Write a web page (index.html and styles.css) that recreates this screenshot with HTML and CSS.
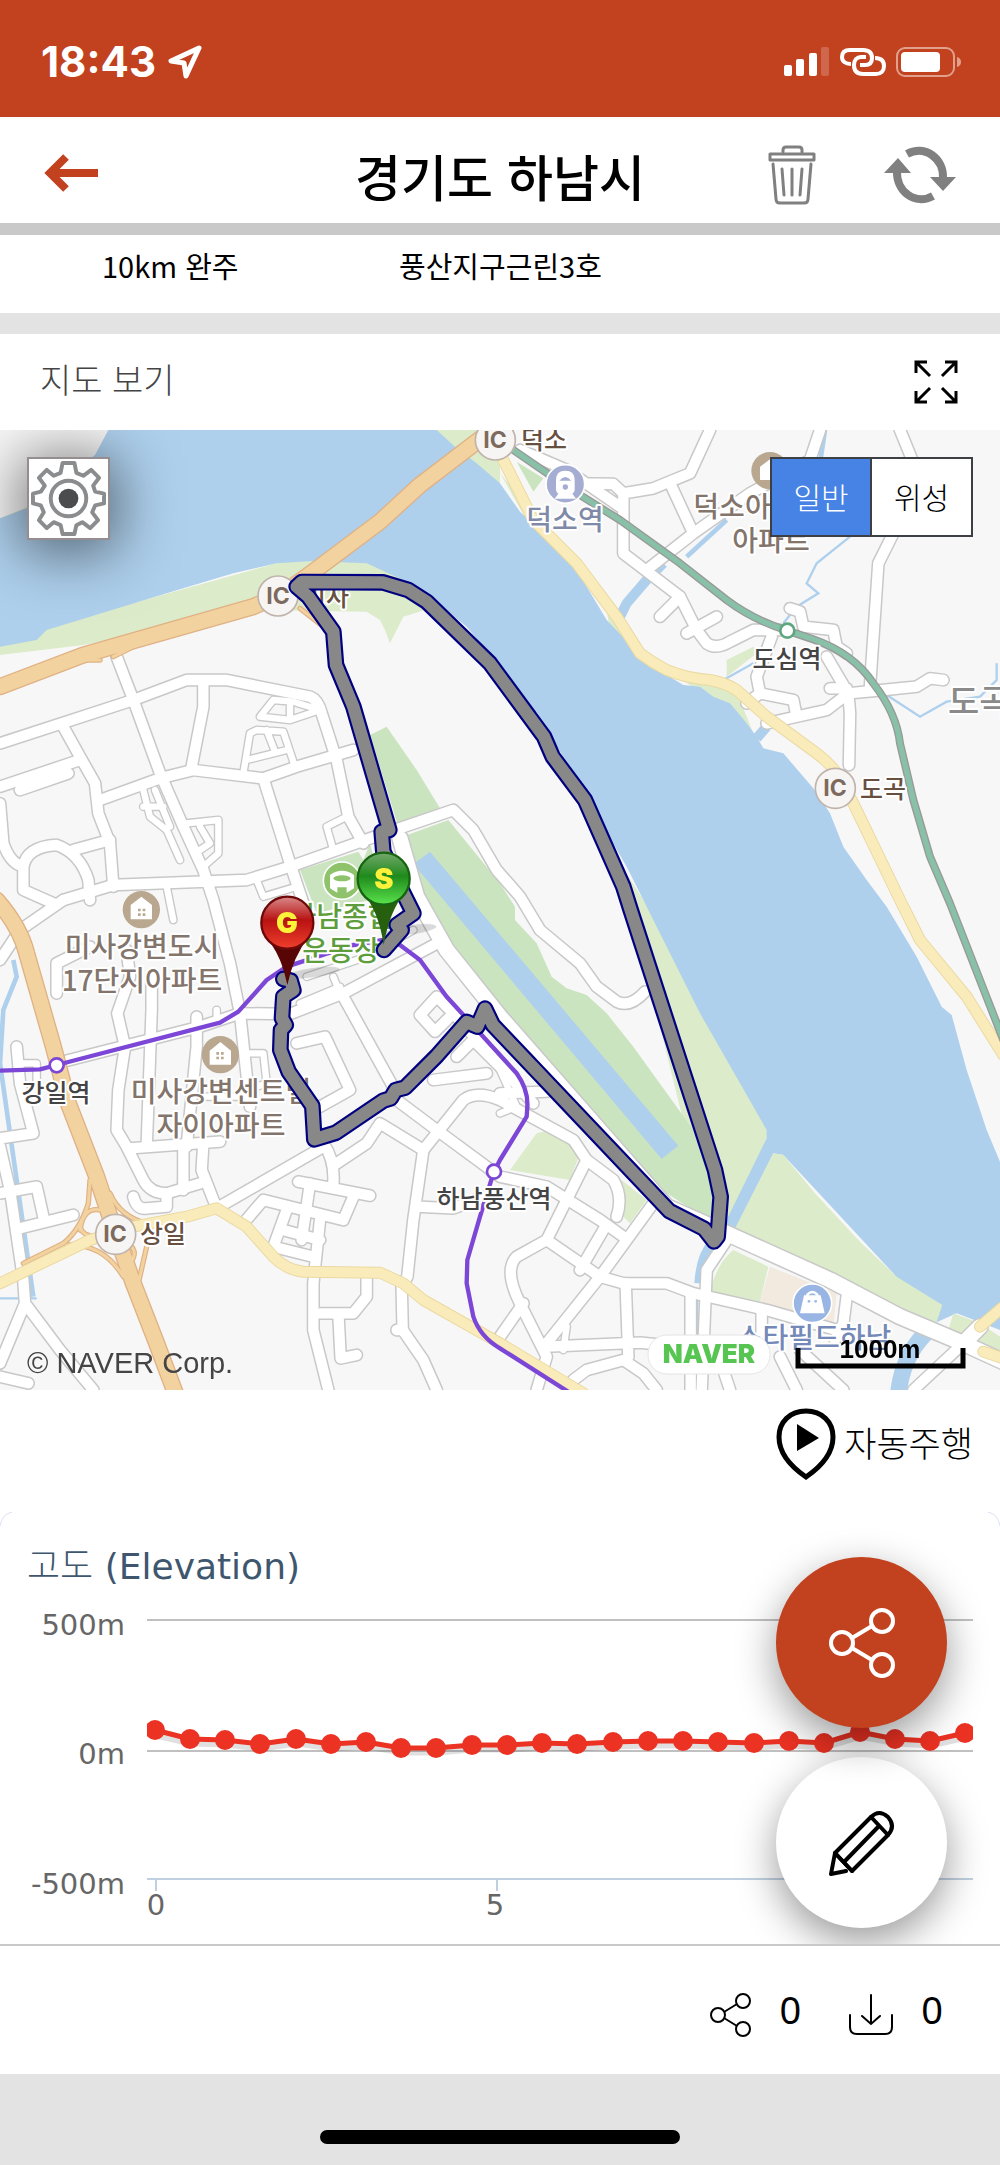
FILE: index.html
```
<!DOCTYPE html>
<html lang="ko">

<head>
  <meta charset="utf-8">
  <meta name="viewport" content="width=device-width, initial-scale=1.0">
  <title>경기도 하남시</title>
  <link rel="stylesheet" href="styles.css">
</head>

<body>
  <div class="statusbar">
    <div class="clock">
      <span>18:43</span>
      <svg width="34" height="34" viewBox="0 0 34 34"><path d="M31 3 L3 16 L16 18 L18 31 Z" fill="none" stroke="#fff" stroke-width="5" stroke-linejoin="round"/></svg>
    </div>
    <div class="phone-icons">
      <svg width="46" height="30" viewBox="0 0 46 30" fill="#fff">
        <rect x="0" y="18" width="8" height="11" rx="2"/>
        <rect x="12" y="12" width="8" height="17" rx="2"/>
        <rect x="25" y="6" width="8" height="23" rx="2"/>
        <rect x="37" y="0" width="8" height="29" rx="2" opacity=".2"/>
      </svg>
      <svg width="46" height="30" viewBox="0 0 46 30" fill="none" stroke="#fff" stroke-width="4">
        <path d="M11 17 C5 17 2 14 2 10 C2 5 5 3 10 3 H23 C29 3 32 6 32 11 C32 16 29 18 25 18 H20"/>
        <path d="M35 11 C41 11 44 14 44 19 C44 24 41 27 36 27 H23 C17 27 14 24 14 18 C14 13 17 10 21 10 H26"/>
      </svg>
      <svg width="66" height="30" viewBox="0 0 66 30">
        <rect x="1" y="1" width="57" height="28" rx="8" fill="none" stroke="#e0a08c" stroke-width="2"/>
        <rect x="5" y="5" width="39" height="20" rx="4" fill="#fff"/>
        <path d="M61 10 Q65 11 65 15 Q65 19 61 20 Z" fill="#e0a08c"/>
      </svg>
    </div>
  </div>

  <header class="header">
    <div class="header-left">
      <button class="icon-button" aria-label="뒤로">
        <svg width="54" height="38" viewBox="0 0 54 38" fill="none" stroke="#c2411e" stroke-width="8"><path d="M54 19 H6"/><path d="M22 3 L6 19 L22 35"/></svg>
      </button>
    </div>
    <h1>경기도 하남시</h1>
    <div class="header-right">
      <button class="icon-button" aria-label="삭제">
        <svg width="48" height="60" viewBox="0 0 48 60" fill="none" stroke="#808080" stroke-width="3" stroke-linecap="round" stroke-linejoin="round">
          <path d="M15 7 V5 Q15 2 18 2 H31 Q34 2 34 5 V7"/>
          <rect x="2" y="9" width="44" height="6"/>
          <path d="M5 19 L8 54 Q8 58 12 58 H36 Q40 58 40 54 L43 19"/>
          <path d="M14 24 L16 50 M24 24 V50 M34 24 L32 50"/>
        </svg>
      </button>
      <button class="icon-button" aria-label="새로고침">
        <svg width="72" height="58" viewBox="0 0 72 58">
          <g fill="none" stroke="#808080" stroke-width="8">
            <path d="M23 8 C41 -2 60 13 59 32"/>
            <path d="M49 50 C31 60 12 45 13 25"/>
          </g>
          <path d="M46 31 H72 L59 45 Z M0 27 L14 12 L27 27 Z" fill="#808080"/>
        </svg>
      </button>
    </div>
  </header>

  <div class="summary">
    <span>10km 완주</span>
    <span>풍산지구근린3호</span>
  </div>

  <div class="map-title">
    <h2>지도 보기</h2>
    <button class="icon-button" aria-label="전체 화면">
      <svg width="44" height="44" viewBox="0 0 44 44" fill="none" stroke="#000" stroke-width="3">
        <path d="M2 13 V2 H13 M2 2 L16 16"/>
        <path d="M31 2 H42 V13 M42 2 L28 16"/>
        <path d="M2 31 V42 H13 M2 42 L16 28"/>
        <path d="M31 42 H42 V31 M42 42 L28 28"/>
      </svg>
    </button>
  </div>

  <div class="map">
    <svg class="map-canvas" viewBox="0 0 1000 960">
      <defs>
        <g id="roads">
          <path d="M0 940 L400 810 L560 750 L680 750 L930 800 Q955 810 965 850 L1010 990 L1045 1160 L1090 1240"/>
          <path d="M350 680 L400 810 L480 1030 L550 1190 L610 1320 L640 1410 L690 1600 L720 1750 L735 1890 L750 2030"/>
          <path d="M190 890 L240 980 L285 1060 L295 1150 L330 1240 L340 1370"/>
          <path d="M0 1070 L240 990 M60 1080 L205 1030"/>
          <path d="M300 1110 L480 1045 L580 1020 L790 1045 L890 1010 L1060 960"/>
          <path d="M610 760 V830 L575 1010 M790 1045 L870 1300 L910 1420"/>
          <path d="M190 1410 L340 1365 L740 1350 L870 1310 L1110 1225 L1360 1140 L1420 1200 L1490 1320 L1560 1400 L1620 1500 L1740 1600 L1790 1670 L1850 1715 Q1890 1735 1935 1685"/>
          <path d="M0 1120 L10 1240 Q30 1300 70 1310 Q80 1250 170 1245 Q240 1270 265 1350 L270 1410 M220 1260 L330 1230 M70 1310 L70 1380 L160 1420"/>
          <path d="M0 1590 L60 1500 L190 1410 M170 1690 V1600 L270 1550"/>
          <path d="M380 1560 L390 1640 L352 1750 L375 1850 L355 1980 L350 2100 L380 2150 L430 2250 Q450 2290 500 2290 L600 2260"/>
          <path d="M455 1640 V1740 L440 2150 M590 1760 V1850 L560 2150"/>
          <path d="M390 2155 L660 2135 M550 2150 V2280 M610 2140 L605 2220 L650 2335 L970 2150"/>
          <path d="M170 1900 L600 1790 L720 1750 L870 1752 L1030 1690 L1330 1530"/>
          <path d="M50 1850 L60 1960 L100 2110 L0 2125 M0 2150 L30 2280 L70 2550 L75 2620 L180 2760 L280 2880 M75 2620 L0 2800 M0 2840 L85 2860"/>
          <path d="M0 2290 L110 2270 L130 2360 M60 2395 L220 2355"/>
          <path d="M400 2300 Q410 2340 440 2335 L500 2330 V2290"/>
          <path d="M895 2255 L1110 2297 M930 2260 L905 2430 M1060 2300 L1030 2370 L790 2310 L730 2380 M970 2140 Q1005 2190 1000 2260 M960 2370 L940 2560 V2700 L985 2880 M860 2340 L820 2450 L940 2480 M850 2400 L960 2430"/>
          <path d="M1010 2200 L1100 2140 L1140 2080 L1270 2160 L1240 2370 L1222 2540 L1205 2570 L1208 2700 L1270 2790 L1310 2880 M1190 2700 H1210"/>
          <path d="M1250 2330 L1360 2335 L1450 2300"/>
          <path d="M1190 2010 L1310 2100 L1500 2240 L1640 2270 L1800 2370 L1870 2420"/>
          <path d="M1270 2160 L1390 2010 Q1430 1980 1500 2010 L1720 2130 L1760 2190 L1840 2250 Q1870 2300 1850 2360"/>
          <path d="M1030 1700 L1190 1990 M890 1840 L975 1820 L1050 1980 L960 2030"/>
          <path d="M1260 1755 L1310 1700 L1360 1750 L1305 1805 Z M1360 1750 L1600 2020"/>
          <path d="M1370 1880 L1420 1830 L1520 1930 M1460 1930 L1300 1950 M1500 1990 L1640 1985"/>
          <path d="M960 2650 H1060 L1100 2600 V2540 M1015 2650 L1022 2785 L1070 2775"/>
          <path d="M1760 2190 L1640 2430 L1550 2480 Q1510 2520 1560 2620 L1640 2780 L1610 2880 M1960 2320 L1800 2540 L1640 2740 M1640 2430 L1800 2540 L1870 2560 H2000 L2080 2590 L2300 2640 L2510 2700"/>
          <path d="M1877 2560 L1885 2780 M1640 2750 L1920 2738 L2040 2750 M1570 2620 L1500 2720 M1810 2400 L1740 2520 M2180 2430 L2120 2520 L2105 2880 M2072 2590 V2880"/>
          <path d="M2285 2640 V2780 M2540 2600 L2530 2680 L2505 2730 M1720 2850 L1760 2820 L1870 2790 L1930 2830 L1970 2880 M2170 2820 L2190 2880 M2340 2780 L2390 2880 M2400 2760 L2530 2880 M2890 2740 L2740 2880"/>
          <path d="M2130 0 L2070 130 L1960 175 L1870 190 L1840 162 L1760 160 M1560 60 L1700 120 L1860 230 M1870 190 V370 L2040 500 L2090 600 L2120 640 Q2150 660 2190 635 L2260 600 L2340 600"/>
          <path d="M1940 420 L2080 310 L2250 190 L2430 90 L2460 0 M2015 170 L2080 310 M2040 500 L1980 560 M2150 560 L2060 610 M2700 0 L2745 110 M2680 310 L2635 400 L2610 770"/>
          <path d="M2370 535 L2400 545 L2410 590 L2500 600 L2510 650 L2540 670 M2315 620 L2270 740 L2280 790 L2380 810 L2390 860 M2480 680 L2545 790 L2650 780 L2750 770 L2790 745 L2830 750 M2490 775 H2540 M2300 880 L2480 840 L2545 790 L2550 850 L2547 1005 M2280 790 L2240 820"/>
        </g>
        <g id="lanes">
          <path d="M780 860 L820 810 L880 815 L960 840 L870 870 Z M870 815 V870 M730 1030 L750 910 L770 900 L850 905 L885 1010 M740 990 L860 960 M800 900 L825 965"/>
          <path d="M430 1080 L450 1160 L500 1200 L540 1290 M465 1080 L510 1190 M430 1130 L490 1130 M560 1180 L655 1170 V1270 L610 1310 M600 1190 L630 1240 L600 1260"/>
          <path d="M1000 1260 L980 1190 L1040 1160 M770 1350 L790 1400 L890 1370 M500 1370 L520 1470 M70 1500 L120 1460"/>
          <path d="M50 1900 H110 V1960 M730 1870 L790 1870 L800 1960 L740 1980 M620 2000 H720 M920 1640 L1100 1580 L1240 1500 M900 1720 L1020 1670 M1000 1640 L1020 1690 M650 1740 V1770"/>
          <path d="M1500 1920 L1550 2030 L1500 2050 M1560 1990 L1500 2000 M1690 2760 L1700 2690"/>
        </g>
        <path id="riverside" d="M1200 1225 L1250 1400 L1340 1560 L1500 1760 L2000 2330 L2180 2410 L2490 2550 L2700 2660 L2890 2740 L3010 2795 M2890 2740 L2940 2690"/>
        <path id="highway" d="M0 770 L250 675 L760 530 L850 490 L940 425 L1140 275 L1260 165 L1450 20 M-10 1410 Q60 1490 80 1570 L160 1850 L205 2020 L290 2240 L330 2360 L400 2560 L470 2740 L530 2900"/>
        <path id="ramps" d="M270 2250 L265 2320 Q240 2400 190 2440 L70 2500 M330 2290 Q360 2360 440 2380 M240 2400 Q250 2330 300 2340 M250 2360 Q220 2420 300 2420 M200 2445 Q310 2440 370 2540 M440 2450 L415 2560 M380 2440 Q420 2460 390 2500 M900 535 L970 590 M400 650 L340 680 M230 690 L300 690"/>
        <path id="avenue" d="M1505 80 L1600 270 Q1680 350 1730 400 L1850 560 L1920 670 Q1960 700 2000 720 Q2060 745 2130 750 Q2180 760 2210 780 L2300 860 L2450 970 Q2490 1000 2510 1030 L2560 1120 L2700 1410 L2760 1530 L2900 1700 L3010 1875 M0 2560 L270 2430 L400 2390 L560 2360 L650 2335 L740 2390 L820 2480 Q860 2520 910 2525 L1140 2528 L1210 2560 L1270 2610 L1500 2740 L1750 2890 M2940 2690 L3010 2630 M2950 2765 L3010 2785"/>
        <path id="rail" d="M1540 60 L1700 170 L1860 270 L2040 400 L2180 510 Q2260 570 2362 602 L2440 628 Q2560 670 2620 760 Q2690 850 2700 940 L2740 1110 L2790 1280 L2850 1420 L3010 1830"/>
        <path id="track" d="M1152 1560 L1205 1500 L1190 1485 L1240 1450 L1210 1390 L1150 1265 L1145 1205 L1168 1200 L1060 830 L1008 705 L1000 605 L925 500 L890 470 L905 456 L1148 457 L1225 480 L1280 515 L1470 700 L1632 920 L1658 980 L1755 1110 L1870 1370 L1892 1440 L2145 2220 L2162 2300 L2153 2420 L2142 2434 L2112 2396 L2008 2343 L1478 1784 L1455 1736 L1432 1790 L1400 1776 L1310 1878 L1215 1973 L1187 1980 L1172 2005 L1150 2012 L1008 2108 L943 2128 L937 2028 L866 1925 L841 1860 L843 1800 L857 1785 L846 1765 L850 1700 L880 1680 L872 1652 L850 1647"/>
        <linearGradient id="pinGreen" x1="0" y1="0" x2="0" y2="1">
          <stop offset="0" stop-color="#74a86c"/>
          <stop offset=".45" stop-color="#1f8a1c"/>
          <stop offset="1" stop-color="#5ae34c"/>
        </linearGradient>
        <linearGradient id="pinRed" x1="0" y1="0" x2="0" y2="1">
          <stop offset="0" stop-color="#d98a8a"/>
          <stop offset=".45" stop-color="#b81212"/>
          <stop offset="1" stop-color="#f0402c"/>
        </linearGradient>
      </defs>

      <!-- land, water and roads on the finer grid -->
      <svg width="1000" height="960" viewBox="0 0 3000 2880">
        <rect width="3000" height="2880" fill="#f7f7f7"/>
        <g fill="#dcebc9">
          <path d="M1290 0 H1500 V160 L1420 120 Z M0 265 L80 232 L85 245 L0 272 Z"/>
          <path d="M0 675 L250 645 L780 540 L1100 545 L1140 570 L1155 600 L1170 640 L1210 560 L1290 535 V380 H900 L0 630 Z"/>
          <path d="M1860 1300 L1930 1410 L2310 2100 L2185 2400 H2130 Z"/>
          <path d="M1500 130 L1660 320 L1580 270 Z M1820 540 L1900 670 L1830 600 Z M2000 710 L2100 790 L2130 805 L2190 830 L2270 935 L2200 760 Z"/>
          <path d="M2180 690 L2260 650 L2270 670 L2180 740 Z M1610 2110 L1690 2090 L1740 2170 L1710 2250 L1530 2220 Z M1865 2250 L1940 2310 L1890 2380 L1850 2340 Z"/>
        </g>
        <path fill="#aed0ed" d="M325 0 H1310 L1370 55 L1430 100 L1500 160 L1560 245 L1650 330 L1730 420 L1820 570 L1920 675 L2000 735 L2050 765 L2100 770 L2140 800 L2190 820 L2240 880 L2270 920 L2290 955 L2350 970 L2440 1075 L2490 1150 L2530 1250 L2600 1350 L2660 1430 L2750 1580 L2825 1730 L2855 1755 L2900 1920 L2960 2100 L3000 2195 V2700 L2870 2650 L2780 2690 L2680 2530 L2350 2175 L2320 2170 L2200 2410 L2165 2400 L2300 2125 V2100 L2100 1750 L1930 1410 L1880 1310 L1660 930 L1500 710 L1400 590 L1290 500 L1230 460 L1100 400 L940 393 L830 400 L700 430 L500 490 L140 600 L110 630 L0 650 V265 L80 235 L285 75 Z"/>
        <g fill="#dcebc9">
          <path d="M2320 2170 L2350 2175 L2445 2290 L2580 2435 L2690 2540 L2827 2625 L2805 2690 L2500 2560 L2200 2405 Z"/>
          <path d="M2200 2460 L2305 2510 L2280 2615 L2130 2585 Q2150 2500 2200 2460 Z M2860 2650 L2940 2680 L3000 2720 V2770 L2845 2700 Z"/>
        </g>
        <path fill="#f2e9df" d="M2310 2510 L2510 2590 L2500 2690 L2280 2615 Z"/>
        <g fill="#cbe4c0">
          <path d="M1110 915 L1160 890 L1250 1020 L1320 1135 L1195 1190 Z"/>
          <path d="M1195 1225 L1345 1170 L1500 1360 L1545 1430 L1545 1470 L1610 1540 L1655 1640 L1700 1675 L1760 1695 L1820 1750 L1900 1850 L2080 2100 L2160 2300 L2140 2380 L2000 2290 L1500 1730 L1360 1570 L1250 1410 Z"/>
          <path d="M900 1320 L1075 1265 L1090 1290 L1110 1240 L1150 1400 L950 1450 Z M1550 95 L1630 145 L1600 185 Z"/>
        </g>
        <path fill="#aed0ed" d="M1240 1302 L1290 1265 L2035 2147 L1985 2187 Z"/>
        <g fill="none" stroke="#aed0ed">
          <path stroke-width="34" d="M2140 2440 Q2105 2480 2100 2560"/>
          <path stroke-width="14" d="M2088 2580 V2880 M2475 0 L2460 100 M2180 270 L2060 380 M40 1590 L50 1640 L10 1740 L0 1900 L50 2250 L100 2600"/>
          <path stroke-width="30" d="M1990 400 L1940 450 L1880 520 L1860 560 M2300 890 L2270 925"/>
          <path stroke-width="50" d="M2800 2690 Q2710 2760 2695 2890"/>
          <path stroke-width="7" d="M2550 320 L2450 400 L2420 460 L2455 490 L2390 530 L2350 580 M2660 795 L2760 860 L2840 815 L2940 800 L2990 750 V700 M2420 860 L2300 890 M2260 700 L2170 750 M0 2605 H110"/>
        </g>

        <g fill="none" stroke-linejoin="round" stroke-linecap="round">
          <use href="#roads" class="road-case"/>
          <use href="#lanes" class="lane-case"/>
          <use href="#riverside" stroke="#c8c8c8" stroke-width="54"/>
          <use href="#roads" class="road"/>
          <use href="#lanes" class="lane"/>
          <use href="#riverside" stroke="#fff" stroke-width="45"/>
          <use href="#ramps" stroke="#e0b184" stroke-width="16"/>
          <use href="#highway" stroke="#e0b184" stroke-width="52"/>
          <use href="#ramps" stroke="#f2d3a0" stroke-width="9"/>
          <use href="#highway" stroke="#f2d3a0" stroke-width="44"/>
          <use href="#avenue" stroke="#ead9a2" stroke-width="36"/>
          <use href="#avenue" stroke="#faecba" stroke-width="30"/>
          <use href="#rail" stroke="#999" stroke-width="24"/>
          <use href="#rail" stroke="#89c0a8" stroke-width="16"/>
          <path d="M0 1922 L120 1918 L170 1905 L660 1778 L715 1745 L800 1650 L860 1610 L1060 1545 L1150 1530 L1200 1545 L1260 1590 L1340 1700 L1550 1930 Q1585 1980 1582 2030 L1580 2060 L1500 2190 L1480 2230 L1440 2360 L1402 2490 L1400 2560 L1420 2660 Q1440 2720 1500 2755 L1720 2895" stroke="#7c46d6" stroke-width="13"/>
        </g>
        <g fill="#fff" stroke-width="8">
          <circle cx="2362" cy="602" r="21" stroke="#5fa77f"/>
          <circle cx="170" cy="1906" r="21" stroke="#7c46d6"/>
          <circle cx="1482" cy="2225" r="21" stroke="#7c46d6"/>
        </g>

        <g fill="#f7f5f3" stroke="#bfb3ab" stroke-width="5">
          <circle cx="1486" cy="30" r="60"/>
          <circle cx="834" cy="498" r="60"/>
          <circle cx="2506" cy="1075" r="60"/>
          <circle cx="347" cy="2413" r="60"/>
        </g>

        <!-- places -->
        <g stroke="#fff" stroke-width="5">
          <circle cx="1696" cy="162" r="58" fill="#a6add2"/>
          <circle cx="1026" cy="1352" r="56" fill="#8fc36b"/>
          <circle cx="2437" cy="2620" r="58" fill="#98b5e3"/>
        </g>
        <g fill="#b9a78f">
          <circle cx="2310" cy="122" r="56"/>
          <circle cx="424" cy="1439" r="56"/>
          <circle cx="661" cy="1874" r="56"/>
        </g>
        <g fill="#fff">
          <path d="M2280 150 V110 L2310 88 L2340 110 V150 Z M392 1468 V1425 L424 1400 L456 1425 V1468 Z M629 1904 V1862 L661 1836 L693 1862 V1904 Z"/>
          <path d="M1668 178 V150 Q1668 122 1696 122 Q1724 122 1724 150 V178 Q1724 192 1710 192 H1682 Q1668 192 1668 178 Z"/>
          <path d="M1676 190 L1664 206 H1728 L1716 190 Z M990 1335 Q1026 1310 1062 1335 V1375 L1040 1388 V1372 H1012 V1388 L990 1375 Z"/>
          <path d="M2412 2596 H2462 L2474 2650 H2400 Z"/>
        </g>
        <path d="M2422 2604 V2594 Q2437 2578 2452 2594 V2604" fill="none" stroke="#fff" stroke-width="7"/>
        <g fill="#a6add2">
          <path d="M1678 152 Q1696 130 1714 152 Z"/>
          <circle cx="1696" cy="171" r="8"/>
        </g>
        <g fill="#98b5e3">
          <circle cx="2427" cy="2614" r="4"/>
          <circle cx="2447" cy="2614" r="4"/>
        </g>
        <path d="M414 1436 h8 v8 h-8 z m14 0 h8 v8 h-8 z m-14 14 h8 v8 h-8 z m14 0 h8 v8 h-8 z M649 1866 h8 v8 h-8 z m14 0 h8 v8 h-8 z m-14 14 h8 v8 h-8 z m14 0 h8 v8 h-8 z" fill="#b9a78f"/>
        <ellipse cx="1026" cy="1345" rx="26" ry="9" fill="#8fc36b"/>
      </svg>

      <g class="label">
        <g class="ic">
          <text x="495" y="18">IC</text>
          <text x="278" y="174">IC</text>
          <text x="835" y="366">IC</text>
          <text x="115" y="812">IC</text>
        </g>
        <g class="junction">
          <text x="521" y="19">덕소</text>
          <text x="303" y="176">미사</text>
          <text x="860" y="368">도곡</text>
          <text x="140" y="813">상일</text>
        </g>
        <g class="station">
          <text x="787" y="238">도심역</text>
          <text x="56" y="672">강일역</text>
          <text x="494" y="778">하남풍산역</text>
        </g>
        <g class="place">
          <text x="565" y="100" fill="#7f8aa8">덕소역</text>
          <text x="732" y="87">덕소아</text>
          <text x="771" y="121">아파트</text>
          <text x="142" y="527">미사강변도시</text>
          <text x="142" y="561">17단지아파트</text>
          <text x="221" y="672">미사강변센트럴</text>
          <text x="221" y="706">자이아파트</text>
          <text x="342" y="497" fill="#5d9d3c">하남종합</text>
          <text x="341" y="531" fill="#5d9d3c">운동장</text>
          <text x="814" y="918" fill="#7489b8">스타필드하남</text>
        </g>
        <text x="948" y="284" class="town">도곡</text>
      </g>

      <svg width="1000" height="960" viewBox="0 0 3000 2880">
        <g fill="#000" opacity=".15">
          <ellipse cx="1230" cy="1500" rx="80" ry="14" transform="rotate(-8 1230 1500)"/>
          <ellipse cx="940" cy="1628" rx="80" ry="14" transform="rotate(-8 940 1628)"/>
        </g>
        <g fill="none" stroke-linejoin="round" stroke-linecap="round">
          <use href="#track" stroke="#000080" stroke-width="50"/>
          <use href="#track" stroke="#888" stroke-width="37"/>
        </g>
        <path d="M1088 1390 H1214 Q1170 1440 1151 1545 Q1135 1440 1088 1390 Z" fill="#26600f"/>
        <circle cx="1151" cy="1346" r="78" fill="url(#pinGreen)" stroke="#176312" stroke-width="7"/>
        <path d="M799 1522 H925 Q880 1580 862 1665 Q846 1580 799 1522 Z" fill="#570505"/>
        <circle cx="862" cy="1478" r="78" fill="url(#pinRed)" stroke="#6d0909" stroke-width="7"/>
      </svg>
      <g class="pin-letter">
        <text x="384" y="459">S</text>
        <text x="287" y="503">G</text>
      </g>

      <text x="27" y="943" class="copyright">© NAVER Corp.</text>
      <rect x="648" y="905" width="122" height="39" rx="19" fill="#fff" stroke="#e4e4e4"/>
      <text x="709" y="933" class="naver">NAVER</text>
      <path d="M798 918 V936 H963 V918" fill="none" stroke="#000" stroke-width="5"/>
      <text x="880" y="928" class="scale">1000m</text>
    </svg>

    <button class="map-setting" aria-label="지도 설정">
      <svg width="75" height="75" viewBox="0 0 76 76" fill="none" stroke="#8a8c8e" stroke-width="4" stroke-linejoin="round">
        <path d="M32 2 H44 L46 12 L53 15 L61 9 L69 17 L63 25 L65 31 L74 33 V43 L65 45 L62 52 L68 60 L60 68 L52 62 L46 65 L44 74 H32 L30 65 L23 62 L16 68 L8 60 L13 52 L10 45 L2 43 V33 L10 31 L14 25 L8 17 L16 9 L23 15 L30 12 Z"/>
        <circle cx="38" cy="38" r="18"/>
        <circle cx="38" cy="38" r="10" fill="#4a4c4e" stroke="none"/>
      </svg>
    </button>
    <div class="map-type">
      <button class="active">일반</button>
      <button>위성</button>
    </div>
  </div>

  <div class="drive">
    <button class="drive-button">
      <svg width="60" height="72" viewBox="0 0 60 72">
        <path d="M30 3 C46 3 57 14 57 29 C57 44 46 58 30 69 C14 58 3 44 3 29 C3 14 14 3 30 3 Z" fill="none" stroke="#000" stroke-width="5"/>
        <path d="M21 16 L43 30 L21 43 Z"/>
      </svg>
      <span>자동주행</span>
    </button>
  </div>

  <div class="chart">
    <svg class="chart-canvas" viewBox="0 0 1000 432">
      <defs>
        <marker id="dot" viewBox="0 0 20 20" refX="10" refY="10" markerWidth="20" markerHeight="20" markerUnits="userSpaceOnUse"><circle cx="10" cy="10" r="10" fill="#eb3223"/></marker>
        <clipPath id="plot"><rect x="147" y="100" width="826" height="280"/></clipPath>
      </defs>
      <path d="M0 14 Q2 2 12 0 M988 0 Q998 2 1000 14" fill="none" stroke="#dfe0f2"/>
      <text x="27" y="67" class="chart-title"><tspan class="thin">고도</tspan> (Elevation)</text>
      <g class="axis-y">
        <text x="125" y="123">500m</text>
        <text x="125" y="252">0m</text>
        <text x="125" y="382">-500m</text>
      </g>
      <g class="axis-x">
        <text x="156" y="403">0</text>
        <text x="495" y="403">5</text>
      </g>
      <path d="M147 108 H973 M147 239 H973" stroke="#c0c0c0" stroke-width="2"/>
      <path d="M147 367 H973 M156 367 V379 M497 367 V379" stroke="#c0d0e0" stroke-width="2"/>
      <g clip-path="url(#plot)" fill="none" stroke-linejoin="round">
        <path d="M156 223 L191 231 L226 232 L261 236 L297 231 L332 236 L367 234 L402 240 L437 240 L473 237 L508 237 L543 235 L578 236 L614 234 L649 233 L684 233 L719 234 L755 235 L790 233 L825 235 L861 224 L896 231 L931 233 L966 225" stroke="#000" stroke-opacity=".12" stroke-width="7"/>
        <polyline class="line" points="155,218 190,227 225,228 260,232 296,227 331,232 366,230 401,236 436,236 472,233 507,233 542,231 577,232 613,230 648,229 683,229 718,230 754,231 789,229 824,231 860,220 895,227 930,229 965,221"/>
      </g>
    </svg>
    <div class="fabs">
      <button class="fab share" aria-label="공유">
        <svg width="66" height="70" viewBox="0 0 66 70" fill="none" stroke="#fff" stroke-width="4"><circle cx="13" cy="35" r="11"/><circle cx="53" cy="13" r="11"/><circle cx="53" cy="57" r="11"/><path d="M23 30 L43 18 M23 40 L43 52"/></svg>
      </button>
      <button class="fab" aria-label="편집">
        <svg width="66" height="66" viewBox="0 0 66 66" fill="none" stroke="#000" stroke-width="4" stroke-linejoin="round" stroke-linecap="round">
          <path d="M6 43 L42 7 Q50 -1 59 7 Q67 16 59 25 L23 61 Z"/>
          <path d="M6 43 L2 64 L17 61 M6 43 L23 61 M42 7 L59 25 M15 52 L50 16"/>
        </svg>
      </button>
    </div>
  </div>

  <div class="counts">
    <button class="count">
      <svg width="42" height="44" viewBox="0 0 42 44" fill="none" stroke="#000" stroke-width="2"><circle cx="8" cy="22" r="7"/><circle cx="33" cy="8" r="7"/><circle cx="33" cy="36" r="7"/><path d="M14 19 L27 11 M14 25 L27 33"/></svg>
      <span>0</span>
    </button>
    <button class="count">
      <svg width="44" height="44" viewBox="0 0 44 44" fill="none" stroke="#000" stroke-width="2" stroke-linecap="round"><path d="M22 2 V31 M13 23 L22 31 L31 23 M1 22 V34 Q1 41 8 41 H36 Q43 41 43 34 V22"/></svg>
      <span>0</span>
    </button>
  </div>

  <div class="home-area">
    <div class="home-bar"></div>
  </div>
</body>

</html>
```

FILE: styles.css
```
* {
  margin: 0;
  padding: 0;
  box-sizing: border-box;
}

body {
  font-family: 'Noto Sans CJK KR', 'Noto Sans', sans-serif;
  color: #000;
  background: #e3e3e3;
}

button {
  font-family: inherit;
  color: inherit;
  background: none;
  border: none;
  cursor: pointer;
}

svg {
  display: block;
  flex: none;
}

/* Phone status bar */
.statusbar {
  display: flex;
  align-items: center;
  justify-content: space-between;
  height: 117px;
  padding: 6px 38px 0 41px;
  background: #c2411e;
  color: #fff;
}

.clock {
  display: flex;
  align-items: center;
  gap: 12px;
  font-family: Inter, sans-serif;
  font-size: 42px;
  font-weight: 700;
}

.phone-icons {
  display: flex;
  align-items: center;
  gap: 10px;
}

.header {
  display: grid;
  grid-template-columns: 1fr auto 1fr;
  align-items: center;
  height: 118px;
  padding: 10px 44px 0;
  background: #fff;
  border-bottom: 12px solid #c9c9c9;
}

.header h1 {
  font-size: 50px;
  font-weight: 500;
  line-height: 60px;
}

.header-right {
  display: flex;
  align-items: center;
  justify-content: flex-end;
  gap: 68px;
}

.summary {
  display: grid;
  grid-template-columns: 297px 1fr;
  height: 78px;
  padding: 8px 102px;
  background: #fff;
  font-size: 29px;
  line-height: 44px;
  white-space: nowrap;
}

.map-title {
  display: flex;
  align-items: center;
  justify-content: space-between;
  height: 96px;
  margin-top: 21px;
  padding: 0 42px 0 40px;
  background: #fff;
}

.map-title h2 {
  padding-bottom: 7px;
  font-size: 34px;
  font-weight: 300;
  line-height: 48px;
  color: #444;
}

/* Map */
.map {
  position: relative;
  overflow: hidden;
}

.map-canvas,
.chart-canvas {
  width: 100%;
  height: auto;
}

.road-case {
  stroke: #c8c8c8;
  stroke-width: 40px;
}

.road {
  stroke: #fff;
  stroke-width: 31px;
}

.lane-case {
  stroke: #c8c8c8;
  stroke-width: 27px;
}

.lane {
  stroke: #fff;
  stroke-width: 19px;
}

.label text {
  stroke: #fff;
  stroke-width: 4px;
  stroke-linejoin: round;
  paint-order: stroke;
  font-weight: 500;
}

.label .ic {
  font-family: Inter, sans-serif;
  font-size: 23px;
  fill: #7d6a5e;
  text-anchor: middle;
}

.label .ic text {
  stroke: none;
  font-weight: 700;
}

.label .junction {
  font-size: 25px;
  fill: #67503f;
}

.label .station {
  font-size: 25px;
  fill: #444;
  text-anchor: middle;
}

.label .place {
  font-size: 28px;
  fill: #83756c;
  text-anchor: middle;
}

.label .town {
  font-size: 34px;
  fill: #8a8a8a;
}

.pin-letter {
  font-family: Inter, sans-serif;
  font-size: 29px;
  font-weight: 900;
  fill: #fdf23a;
  text-anchor: middle;
}

.copyright {
  font-family: 'Liberation Sans', sans-serif;
  font-size: 29px;
  fill: #444;
}

.naver {
  font-family: Inter, sans-serif;
  font-size: 26px;
  font-weight: 900;
  fill: #57c552;
  text-anchor: middle;
}

.scale {
  font-family: 'Liberation Sans', sans-serif;
  font-size: 26px;
  font-weight: 700;
  text-anchor: middle;
}

.map-setting {
  position: absolute;
  top: 27px;
  left: 27px;
  padding: 2px;
  border: 2px solid #948e90;
  background: #fff;
  box-shadow: 0 6px 60px 6px rgba(0, 0, 0, 0.55);
}

.map-type {
  position: absolute;
  top: 27px;
  right: 27px;
  display: flex;
  border: 2px solid #3c3f44;
  background: #fff;
}

.map-type button {
  width: 99px;
  height: 76px;
  padding-bottom: 3px;
  font-size: 30px;
  font-weight: 300;
}

.map-type .active {
  width: 100px;
  border-right: 2px solid #3c3f44;
  background: #4683e4;
  color: #fff;
}

.drive {
  display: flex;
  justify-content: flex-end;
  height: 122px;
  padding: 18px 27px;
  background: #fff;
}

.drive-button {
  display: flex;
  align-items: center;
  gap: 8px;
  height: 72px;
  font-size: 35px;
  font-weight: 300;
}

.drive-button span {
  padding-bottom: 6px;
}

/* Elevation chart */
.chart {
  position: relative;
  overflow: hidden;
  background: #fff;
  border-bottom: 2px solid #c9c9c9;
}

.chart text {
  font-family: 'DejaVu Sans', 'Noto Sans CJK KR', sans-serif;
  font-size: 29px;
  fill: #666;
}

.chart .chart-title {
  font-size: 36px;
  fill: #3e576f;
}

.chart-title .thin {
  font-family: 'Noto Sans CJK KR', sans-serif;
  font-weight: 300;
}

.axis-y {
  text-anchor: end;
}

.axis-x {
  text-anchor: middle;
}

.line {
  stroke: #eb3223;
  stroke-width: 5px;
  marker-start: url(#dot);
  marker-mid: url(#dot);
  marker-end: url(#dot);
}

.fabs {
  position: absolute;
  top: 45px;
  right: 53px;
  display: flex;
  flex-direction: column;
  gap: 29px;
}

.fab {
  display: flex;
  align-items: center;
  justify-content: center;
  width: 171px;
  height: 171px;
  border-radius: 50%;
  background: #fff;
  box-shadow: 0 14px 40px rgba(0, 0, 0, 0.4);
}

.fab.share {
  position: relative;
  z-index: 1;
  background: #c2411e;
}

.counts {
  display: flex;
  align-items: center;
  justify-content: flex-end;
  gap: 48px;
  height: 128px;
  padding: 0 57px 2px;
  background: #fff;
}

.count {
  display: flex;
  align-items: center;
  gap: 28px;
  font-family: 'Noto Sans', sans-serif;
  font-size: 38px;
  line-height: 44px;
}

.count svg {
  margin-top: 12px;
}

.home-area {
  display: flex;
  justify-content: center;
  height: 91px;
  padding-top: 56px;
}

.home-bar {
  width: 36%;
  height: 14px;
  border-radius: 7px;
  background: #000;
}
```
